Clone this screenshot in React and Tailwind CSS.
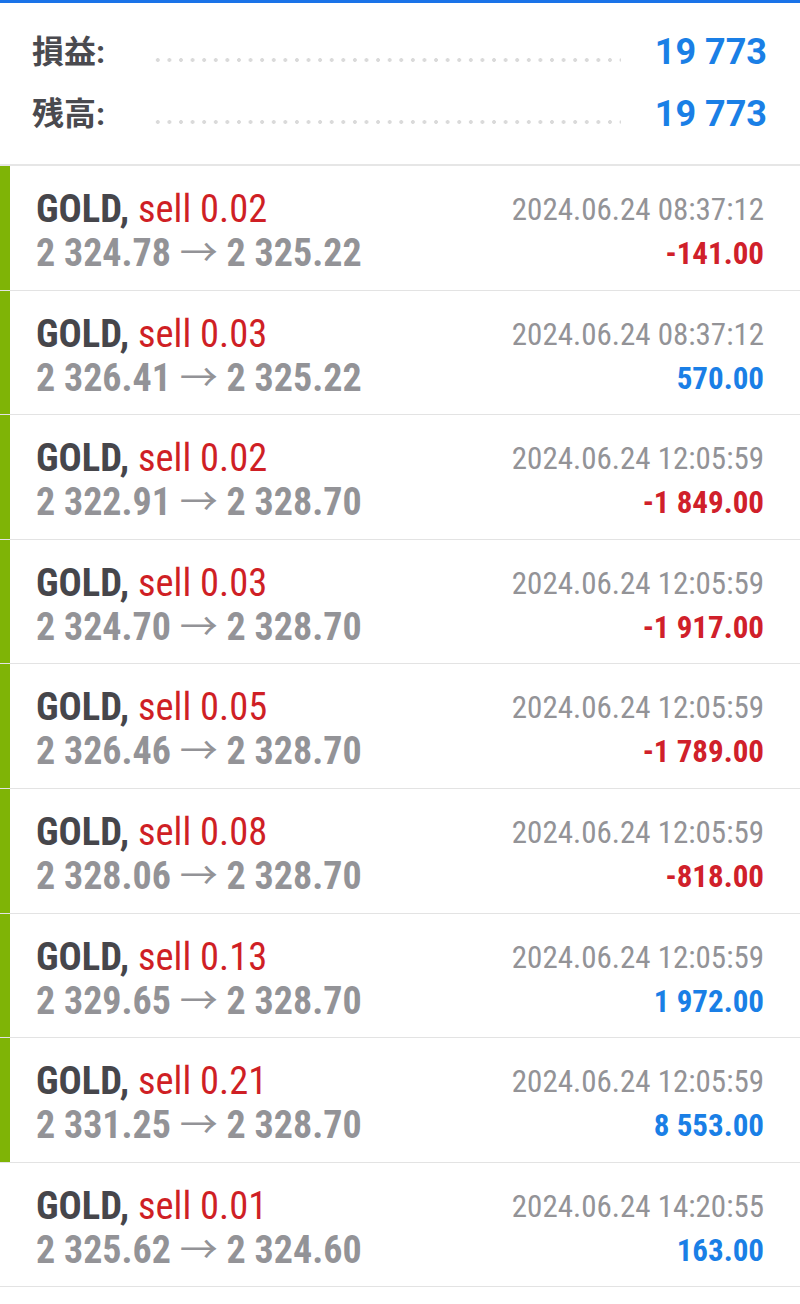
import React from 'react';

const trades = [
  { lot: '0.02', from: '2 324.78', to: '2 325.22', time: '2024.06.24 08:37:12', pl: '-141.00', bar: true },
  { lot: '0.03', from: '2 326.41', to: '2 325.22', time: '2024.06.24 08:37:12', pl: '570.00', bar: true },
  { lot: '0.02', from: '2 322.91', to: '2 328.70', time: '2024.06.24 12:05:59', pl: '-1 849.00', bar: true },
  { lot: '0.03', from: '2 324.70', to: '2 328.70', time: '2024.06.24 12:05:59', pl: '-1 917.00', bar: true },
  { lot: '0.05', from: '2 326.46', to: '2 328.70', time: '2024.06.24 12:05:59', pl: '-1 789.00', bar: true },
  { lot: '0.08', from: '2 328.06', to: '2 328.70', time: '2024.06.24 12:05:59', pl: '-818.00', bar: true },
  { lot: '0.13', from: '2 329.65', to: '2 328.70', time: '2024.06.24 12:05:59', pl: '1 972.00', bar: true },
  { lot: '0.21', from: '2 331.25', to: '2 328.70', time: '2024.06.24 12:05:59', pl: '8 553.00', bar: true },
  { lot: '0.01', from: '2 325.62', to: '2 324.60', time: '2024.06.24 14:20:55', pl: '163.00', bar: false },
];

const SummaryRow = ({ label, value }) => (
  <div className="flex items-center h-[62px]">
    <span className="text-[32px] font-bold text-[#4a4a4f] w-[120px]">{label}</span>
    <div className="flex-1 h-[6px] mt-[16px] mr-[34px] bg-[radial-gradient(circle,#dadada_1.6px,transparent_2.2px)] bg-[length:11.6px_6px] bg-repeat-x"></div>
    <span className="text-[36px] font-bold text-[#1a7fe6] font-stretch-normal">{value}</span>
  </div>
);

const TradeRow = ({ t }) => {
  const loss = t.pl.startsWith('-');
  return (
    <div className="flex h-[124.6px] border-b border-[#e3e3e3]">
      <div className={`w-[10px] ${t.bar ? 'bg-[#7fb406]' : 'bg-transparent'}`}></div>
      <div className="flex-1 flex justify-between pl-[26px] pr-[36px] pt-[21px]">
        <div className="flex flex-col leading-[44px]">
          <div className="text-[38.5px]">
            <span className="font-bold text-[#46464b]">GOLD, </span>
            <span className="text-[#cf1f25]">sell {t.lot}</span>
          </div>
          <div className="text-[38px] font-bold text-[#939397]">
            {t.from} <span className="font-normal font-stretch-normal">→</span> {t.to}
          </div>
        </div>
        <div className="flex flex-col items-end">
          <div className="text-[31px] text-[#939397] leading-[44px] mt-[1px]">{t.time}</div>
          <div className={`text-[31px] font-bold leading-[44px] ${loss ? 'text-[#d0202a]' : 'text-[#1a7fe6]'}`}>{t.pl}</div>
        </div>
      </div>
    </div>
  );
};

export default function App() {
  return (
    <div className="w-[800px] min-h-[1304px] bg-white font-['Roboto','Noto_Sans_CJK_JP',sans-serif] font-stretch-condensed">
      <div className="h-[3px] bg-[#1a73e8]"></div>
      <div className="pl-[32px] pr-[33px] pt-[18px] pb-[19px] border-b-2 border-[#e6e6e6]">
        <SummaryRow label="損益:" value="19 773" />
        <SummaryRow label="残高:" value="19 773" />
      </div>
      {trades.map((t, i) => (
        <TradeRow key={i} t={t} />
      ))}
    </div>
  );
}
